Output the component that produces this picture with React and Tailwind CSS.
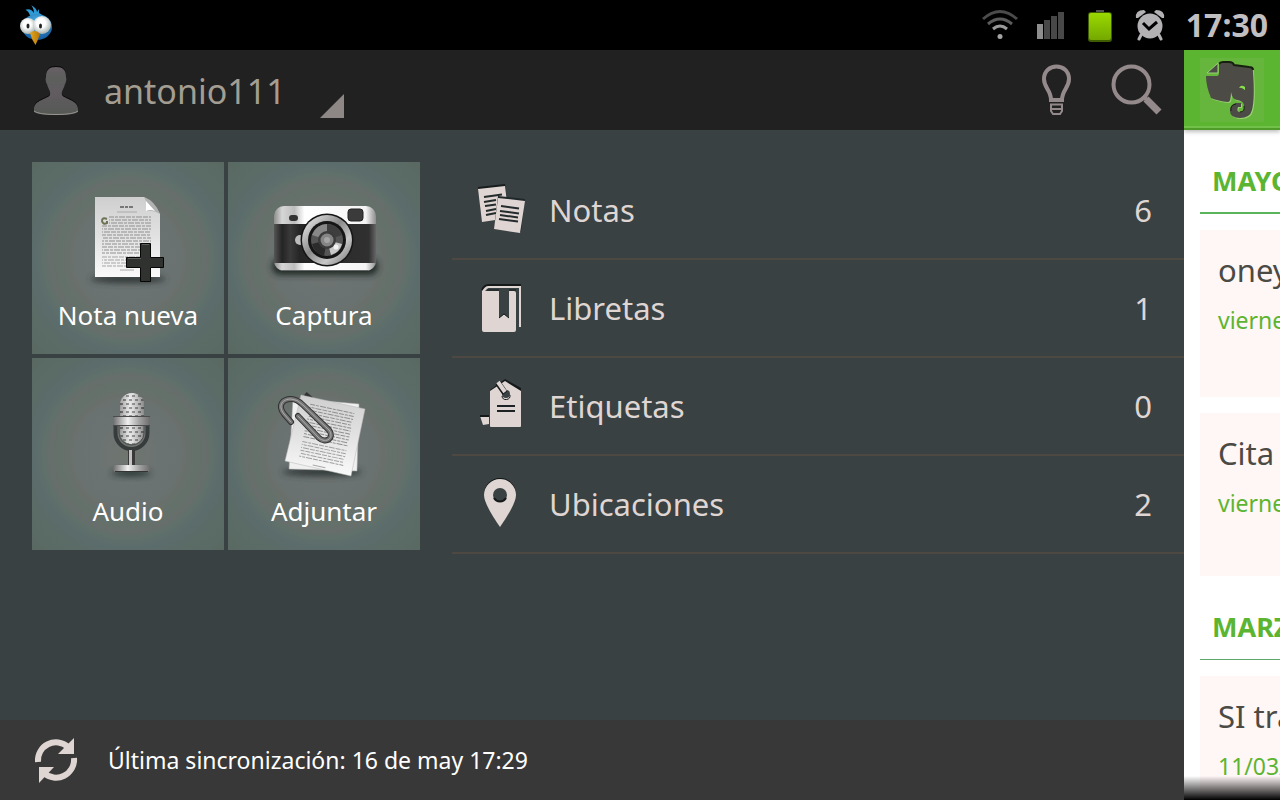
import React from 'react';

const actions = [
  { label: 'Nota nueva', Icon: NewNoteIcon },
  { label: 'Captura', Icon: CameraIcon },
  { label: 'Audio', Icon: MicIcon },
  { label: 'Adjuntar', Icon: AttachIcon },
];

const sections = [
  { label: 'Notas', count: 6, Icon: NotesIcon },
  { label: 'Libretas', count: 1, Icon: NotebookIcon },
  { label: 'Etiquetas', count: 0, Icon: TagIcon },
  { label: 'Ubicaciones', count: 2, Icon: PinIcon },
];

/* ---------- status bar ---------- */

function BirdIcon() {
  return (
    <svg width="34" height="42" viewBox="19 4 34 42">
      <defs>
        <radialGradient id="birdBody" cx="0.5" cy="0.3" r="0.7">
          <stop offset="0" stopColor="#4db4e6" />
          <stop offset="1" stopColor="#12599f" />
        </radialGradient>
        <radialGradient id="birdEye" cx="0.45" cy="0.4" r="0.6">
          <stop offset="0.4" stopColor="#ffffff" />
          <stop offset="1" stopColor="#a9b2b0" />
        </radialGradient>
        <linearGradient id="birdBeak" x1="0" y1="0" x2="1" y2="0">
          <stop offset="0" stopColor="#e0a724" />
          <stop offset="1" stopColor="#b87404" />
        </linearGradient>
      </defs>
      <path d="M31 18 C29 12 27 10 25 10 C29 8 32 10 34 13 C34 9 32 6 31 5 C35 7 37 10 37 12 L39 9 L39 13 C42 14 43 16 43 19 Z" fill="#2f9bd6" />
      <ellipse cx="37" cy="27" rx="15" ry="13" fill="url(#birdBody)" />
      <circle cx="28" cy="26" r="8" fill="url(#birdEye)" />
      <circle cx="42" cy="25" r="9" fill="url(#birdEye)" />
      <ellipse cx="28" cy="26" rx="1.500" ry="2.500" fill="#222" />
      <ellipse cx="40.500" cy="26" rx="1.500" ry="2.500" fill="#222" />
      <path d="M30 33 Q32 31 35 31 Q38 31 40 34 Q38 40 35.500 45 Q32 40 30 33 Z" fill="url(#birdBeak)" />
    </svg>
  );
}

function WifiIcon() {
  return (
    <svg width="38" height="32" viewBox="981 9 38 32" fill="none" strokeWidth="3">
      <path d="M983 19 Q1000 4 1017 19" stroke="#4b4b4b" />
      <path d="M988 24 Q1000 14 1012 24" stroke="#5c5c5c" />
      <path d="M993 29 Q1000 23 1007 29" stroke="#9a9a9a" />
      <circle cx="1000" cy="36.500" r="2.500" fill="#a5a5a5" />
    </svg>
  );
}

function SignalIcon() {
  return (
    <svg width="28" height="28" viewBox="0 0 28 28" fill="#484848">
      <rect x="0" y="13" width="6" height="15" fill="#8e8e8e" />
      <rect x="7" y="9" width="6" height="19" />
      <rect x="14" y="5" width="6" height="23" />
      <rect x="21" y="1" width="6" height="27" />
    </svg>
  );
}

function BatteryIcon() {
  return (
    <svg width="28" height="36" viewBox="0 0 28 36">
      <defs>
        <linearGradient id="battery" x1="0" y1="0" x2="0" y2="1">
          <stop offset="0" stopColor="#9ad900" />
          <stop offset="1" stopColor="#74a800" />
        </linearGradient>
      </defs>
      <rect x="10" y="3" width="8" height="3" fill="#555" />
      <rect x="2" y="5" width="24" height="30" rx="3" fill="#3e5c00" />
      <rect x="3" y="6" width="22" height="27" rx="2" fill="url(#battery)" />
    </svg>
  );
}

function AlarmIcon() {
  return (
    <svg width="30" height="32" viewBox="0 0 30 32">
      <g fill="#b4b1b4">
        <path d="M1 9 Q0 1 9 1 L11 3 L3 9 Z" />
        <path d="M29 9 Q30 1 21 1 L19 3 L27 9 Z" />
        <circle cx="15" cy="17" r="12.500" />
      </g>
      <path d="M6 26 L4 30 M24 26 L26 30" stroke="#b4b1b4" strokeWidth="3" strokeLinecap="round" />
      <path d="M8 14 L14 20 L22 13" fill="none" stroke="#000" strokeWidth="3" />
    </svg>
  );
}

/* ---------- header and footer ---------- */

function AvatarIcon() {
  return (
    <svg width="48" height="52" viewBox="32 65 48 52">
      <defs>
        <linearGradient id="avatar" x1="0" y1="0" x2="0" y2="1">
          <stop offset="0" stopColor="#686066" />
          <stop offset="0.250" stopColor="#5c5f5c" />
          <stop offset="0.500" stopColor="#625c61" />
          <stop offset="1" stopColor="#555955" />
        </linearGradient>
        <path id="bust" d="M56 68 C49 68 46 71 46 78 C45 79 46 84 47 85 C48 90 51 92 50 96 C48 100 34 101 34 110 V113 Q38 116 56 116 Q74 116 78 113 V110 C78 101 64 100 62 96 C61 92 64 90 65 85 C66 84 67 79 66 78 C66 71 63 68 56 68 Z" />
      </defs>
      <use href="#bust" y="-1" fill="#0a0a0a" />
      <use href="#bust" fill="url(#avatar)" />
      <path d="M34 112 Q38 115.500 56 115.500 Q74 115.500 78 112" fill="none" stroke="#9a9692" />
    </svg>
  );
}

function BulbIcon() {
  return (
    <svg width="32" height="52" viewBox="1041 64 32 52" fill="none" stroke="#958a8b">
      <path d="M1051 100 C1051 90 1044 88 1044 79 C1044 71 1050 66.500 1056.500 66.500 C1063 66.500 1069 71 1069 79 C1069 88 1062 90 1062 100 Z" strokeWidth="4" />
      <path d="M1051 104.500 H1062 V111 L1060 114 H1053 L1051 111 Z M1051 109 H1062" strokeWidth="2" />
    </svg>
  );
}

function SearchIcon() {
  return (
    <svg width="52" height="52" viewBox="1111 63 52 52" fill="none" stroke="#958a8b">
      <circle cx="1131.500" cy="83.500" r="18" strokeWidth="4" />
      <path d="M1146 98 L1159 111" strokeWidth="7" />
      <path d="M1143 95 L1147 99" strokeWidth="4" />
    </svg>
  );
}

function ElephantIcon() {
  return (
    <svg width="64" height="64" viewBox="1200 58 64 64">
      <defs>
        <path id="elephant" d="M1219 65 Q1219 62 1223 62 H1229 Q1233 62 1234 65 L1249 67 Q1253 67 1253 72 Q1255 98 1252 110 Q1250 118 1240 118 Q1230 118 1230 111 Q1230 104 1236 103 H1241 V107 H1238 Q1236 112 1240 112 Q1245 112 1244 106 Q1244 101 1237 100 Q1232 99 1231 92 Q1231 102 1228 102 Q1218 101 1211 98 Q1206 86 1206 76 H1217 Q1219 76 1219 73 Z" />
      </defs>
      <rect x="1200" y="58" width="64" height="64" fill="#66b53c" />
      <use href="#elephant" x="1" y="1" fill="#9bd276" />
      <use href="#elephant" fill="#4c4b46" />
      <path d="M1219 64 Q1220 62 1223 62 H1229 Q1233 62 1234 65 L1249 67 Q1253 67 1253 70" fill="none" stroke="#17200f" strokeWidth="2" />
      <path d="M1231 111 Q1230 105 1236 104 M1240 112 Q1245 112 1244 106" fill="none" stroke="#17200f" />
      <path d="M1207 73 L1218 63 V73 Z" fill="#4c4b46" stroke="#9bd276" />
      <path d="M1239 88 Q1241 84 1245 87 V90 Q1241 87 1239 88 Z" fill="#8ae04c" />
    </svg>
  );
}

function SyncIcon() {
  return (
    <svg width="48" height="48" viewBox="32 27 48 48">
      <g fill="none" stroke="#dfd5d2" strokeWidth="6">
        <path d="M38 53 A18 18 0 0 1 68 38" />
        <path d="M74 49 A18 18 0 0 1 44 64" />
      </g>
      <path d="M74 29 V45 H58 Z M39 74 V58 H54 Z" fill="#dfd5d2" />
    </svg>
  );
}

/* ---------- tile drawings, in tile coordinates ---------- */

function TextLines({ x1, x2, from, count, color = '#8f8f8f' }) {
  return Array.from({ length: count }, (_, i) => (
    <path key={i} d={`M${x1} ${from + i * 3} H${x2}`} stroke={color} strokeWidth="1" strokeDasharray="5 1 3 1 6 1" strokeDashoffset={i * 4} />
  ));
}

function TileArt({ children }) {
  return (
    <svg width="128" height="132" viewBox="32 0 128 132" aria-hidden="true">
      <defs>
        <filter id="soft" x="-20%" y="-100%" width="140%" height="300%">
          <feGaussianBlur stdDeviation="3" />
        </filter>
        <linearGradient id="chrome" x1="0" y1="0" x2="1" y2="0">
          <stop offset="0" stopColor="#8d8d8d" />
          <stop offset="0.080" stopColor="#d6d6d6" />
          <stop offset="0.200" stopColor="#bdbdbd" />
          <stop offset="0.300" stopColor="#ffffff" />
          <stop offset="0.900" stopColor="#f4f4f4" />
          <stop offset="1" stopColor="#8d8d8d" />
        </linearGradient>
        <linearGradient id="steel" x1="0" y1="0" x2="1" y2="0">
          <stop offset="0" stopColor="#6c6c6c" />
          <stop offset="0.400" stopColor="#f0f0f0" />
          <stop offset="0.700" stopColor="#a5a5a5" />
          <stop offset="1" stopColor="#6c6c6c" />
        </linearGradient>
        <linearGradient id="paper" x1="0" y1="0" x2="0" y2="1">
          <stop offset="0" stopColor="#cfcfcf" />
          <stop offset="0.500" stopColor="#e2e2e2" />
          <stop offset="1" stopColor="#fafafa" />
        </linearGradient>
        <linearGradient id="leather" x1="0" y1="0" x2="1" y2="0">
          <stop offset="0" stopColor="#555" />
          <stop offset="0.080" stopColor="#242424" />
          <stop offset="0.160" stopColor="#3a3a3a" />
          <stop offset="0.250" stopColor="#262626" />
          <stop offset="0.930" stopColor="#303030" />
          <stop offset="1" stopColor="#666" />
        </linearGradient>
        <linearGradient id="ring" x1="0" y1="0" x2="1" y2="1">
          <stop offset="0" stopColor="#f6f6f6" />
          <stop offset="0.450" stopColor="#8b8b8b" />
          <stop offset="0.700" stopColor="#c8c8c8" />
          <stop offset="1" stopColor="#6d6d6d" />
        </linearGradient>
        <linearGradient id="round" x1="0" y1="0" x2="1" y2="0">
          <stop offset="0" stopColor="#333" stopOpacity="0.4" />
          <stop offset="0.400" stopColor="#fff" stopOpacity="0.3" />
          <stop offset="1" stopColor="#333" stopOpacity="0.5" />
        </linearGradient>
        <pattern id="mesh" width="6" height="8" patternUnits="userSpaceOnUse">
          <rect width="6" height="8" fill="#dcdcdc" />
          <path d="M1 2 H4 M4 6 H7 M-1 6 H1" stroke="#6f6f6f" strokeWidth="2" />
          <path d="M1 0 H4 M4 4 H7" stroke="#f8f8f8" />
        </pattern>
      </defs>
      {children}
    </svg>
  );
}

function NewNoteIcon() {
  return (
    <TileArt>
      <ellipse cx="96" cy="117" rx="38" ry="4" fill="#2e3634" filter="url(#soft)" />
      <path d="M63 35 H112 Q122 40 128 52 V115 H63 Z" fill="url(#paper)" />
      <path d="M112 35 Q116 42 115 49 Q122 48 128 52 Q123 39 112 35 Z" fill="#b2b2b2" />
      <path d="M114 39 L123 49 Q118 47 114 49 Z" fill="#fff" />
      <path d="M88 45 H102" stroke="#777" strokeWidth="2" strokeDasharray="4 1 3 1" />
      <path d="M85 50 H105" stroke="#aaa" />
      <TextLines x1={77} x2={119} from={55} count={3} />
      <TextLines x1={70} x2={119} from={64} count={10} />
      <TextLines x1={70} x2={119} from={95} count={4} color="#a5a5a5" />
      <path d="M75 57 Q70 55 70 59 Q71 63 75 61 V59" fill="none" stroke="#6b7353" strokeWidth="2" />
      <path d="M88 108 H102" stroke="#aaa" />
      <path d="M108.500 81.500 H118.500 V95.500 H131.500 V105.500 H118.500 V119.500 H108.500 V105.500 H94.500 V95.500 H108.500 Z" fill="#303230" stroke="#060606" strokeLinejoin="round" />
      <path d="M110 82.500 H117 M96 96.500 H109" stroke="#5c5e5c" />
    </TileArt>
  );
}

function CameraIcon() {
  return (
    <TileArt>
      <rect x="44" y="96" width="106" height="17" rx="8" fill="#222a28" filter="url(#soft)" />
      <rect x="46" y="44" width="102" height="65" rx="10" fill="url(#chrome)" />
      <rect x="46" y="62" width="102" height="39" fill="url(#leather)" />
      <path d="M54 108.500 H140" stroke="#666" />
      <rect x="61" y="53" width="9" height="6" rx="3" fill="#333" />
      <rect x="120" y="47" width="15" height="12" rx="3" fill="#3b3b3b" stroke="#222" />
      <circle cx="72" cy="78" r="5" fill="#bcbcbc" />
      <circle cx="99" cy="78" r="26.500" fill="#151515" />
      <circle cx="99" cy="78" r="25" fill="url(#ring)" />
      <circle cx="99" cy="78" r="19" fill="#161616" />
      <circle cx="99" cy="78" r="16" fill="#555" />
      <path d="M99 78 L84 73 A16 16 0 0 1 99 62 Z" fill="#888" />
      <path d="M99 78 L99 62 A16 16 0 0 1 114 73 Z" fill="#3e3e3e" />
      <path d="M99 78 L114 82 A16 16 0 0 1 103 93 Z" fill="#c9c9c9" />
      <path d="M99 78 L84 82 A16 16 0 0 0 96 94 Z" fill="#2b2b2b" />
      <circle cx="99" cy="78" r="9" fill="#3c3c3c" />
      <circle cx="99" cy="78" r="6.500" fill="#858585" />
      <circle cx="99" cy="78" r="3" fill="#a5a5a5" />
      <circle cx="108" cy="85" r="2.500" fill="#fff" opacity="0.8" />
    </TileArt>
  );
}

function MicIcon() {
  return (
    <TileArt>
      <ellipse cx="99" cy="115" rx="20" ry="3" fill="#1f2d2e" filter="url(#soft)" />
      <rect x="88" y="35" width="24" height="51" rx="12" fill="url(#mesh)" />
      <rect x="88" y="35" width="24" height="51" rx="12" fill="url(#round)" />
      <path d="M83.500 66 V75 A16 16 0 0 0 115.500 75 V66" fill="none" stroke="#383b3b" strokeWidth="4" />
      <path d="M87 67 V75 A12.500 12 0 0 0 112 75 V67" fill="none" stroke="#4d5150" />
      <rect x="81" y="59" width="37" height="8" fill="url(#steel)" />
      <path d="M81 58.500 H118 M81 67.500 H118" stroke="#4c4c4c" />
      <rect x="96" y="92" width="7" height="16" fill="#393939" />
      <rect x="97" y="92" width="3" height="16" fill="#c2c2c2" />
      <rect x="81" y="107" width="37" height="7" rx="3" fill="url(#steel)" />
      <path d="M83 113.500 H116" stroke="#333" />
    </TileArt>
  );
}

const clipPath = 'M62 63 L55 55 C48 46 54 40 62 40 Q68 40 74 46 L100 71 C106 79 97 85 90 79 L69 57';

function AttachIcon() {
  return (
    <TileArt>
      <ellipse cx="94" cy="114" rx="40" ry="4" fill="#2e3634" filter="url(#soft)" />
      <path d="M77 36 L84 42" stroke="#333" strokeWidth="5" />
      <path d="M65 40 L131 46 L129 113 L61 111 Z" fill="#f0f0f0" stroke="#aaa" strokeWidth="0.500" />
      <path d="M73 37 L137 51 L123 118 L57 103 Z" fill="url(#paper)" stroke="#b5b5b5" strokeWidth="0.500" />
      <g transform="rotate(12 97 78)">
        <TextLines x1={76} x2={121} from={50} count={12} />
        <TextLines x1={76} x2={121} from={88} count={6} color="#a0a0a0" />
        <path d="M91 109 H104" stroke="#aaa" />
      </g>
      <g transform="translate(1 1)" fill="none" strokeLinecap="round" strokeLinejoin="round">
        <path d={clipPath} stroke="#323232" strokeWidth="6" />
        <path d={clipPath} stroke="#747474" strokeWidth="4" />
        <path d={clipPath} stroke="#adadad" strokeWidth="1" />
      </g>
    </TileArt>
  );
}

/* ---------- list icons ---------- */

function NotesIcon() {
  return (
    <svg width="52" height="56" viewBox="474 182 52 56" aria-hidden="true">
      <path d="M478 187 L505 184 L509 217 L482 220 Z" fill="#171c1d" />
      <path d="M478 189 L505 186 L509 218 L482 222 Z" fill="#dfd5d2" />
      <path d="M484 197 L502 194.500 M484 202 L496 200 M485 206 L496 204.500 M486 211 L496 209 M486 215 L496 213" stroke="#242b2c" strokeWidth="2" />
      <path d="M498 196 L525 199 L521 232 L494 229 Z" fill="#20282a" />
      <path d="M498 198 L525 201 L520 233 L494 229 Z" fill="#dfd5d2" />
      <path d="M501 206 L519 208.500 M500 211 L519 213.500 M500 215 L518 217.500 M499 219 L518 221.500" stroke="#242b2c" strokeWidth="2" />
    </svg>
  );
}

function NotebookIcon() {
  return (
    <svg width="52" height="56" viewBox="474 280 52 56" aria-hidden="true">
      <path d="M482 290 Q484 285 489 285 H520 V290" fill="none" stroke="#15191a" strokeWidth="2" />
      <path d="M483 292 Q485 287 489 287 H520 V327" fill="none" stroke="#dfd5d2" strokeWidth="2" />
      <path d="M482 291 L489 287 L485 291 H514 Q516 291 516 293 V330 Q516 332 514 332 H484 Q482 332 482 330 Z" fill="#dfd5d2" />
      <path d="M487 290 H516" stroke="#272e30" strokeWidth="2" />
      <path d="M499 289 H509 V318 L504 314 L499 318 Z" fill="#3a4143" />
      <path d="M499 318 L504 314 L509 318" fill="none" stroke="#121616" strokeWidth="1" />
    </svg>
  );
}

function TagIcon() {
  return (
    <svg width="52" height="56" viewBox="474 378 52 56" aria-hidden="true">
      <path d="M490 390 L505 379 L521 388 V395 H490 Z" fill="#15191a" />
      <path d="M490 391 L505 381 L521 391 V426 Q521 427 520 427 H491 Q490 427 490 426 Z" fill="#dfd5d2" />
      <circle cx="506" cy="394" r="4" fill="#3a4143" />
      <path d="M502 396 A4 4 0 0 0 510 395" fill="none" stroke="#15191a" />
      <path d="M498 383 L505 393" stroke="#15191a" strokeWidth="6" />
      <path d="M498 382 L505 392" stroke="#dfd5d2" strokeWidth="4" />
      <path d="M497 406 H515 M497 411 H515" stroke="#1d2324" strokeWidth="2" />
      <path d="M480 416 H489 V424 L483 425 Z" fill="#dfd5d2" />
      <path d="M480 416 H489" stroke="#15191a" strokeWidth="2" />
    </svg>
  );
}

function PinIcon() {
  return (
    <svg width="52" height="56" viewBox="474 476 52 56" aria-hidden="true">
      <path d="M484 494 A16 16 0 0 1 516 494 Z" fill="#101414" />
      <path d="M500 527 Q484 504 484 495 A16 16 0 0 1 516 495 Q516 504 500 527 Z" fill="#dfd5d2" />
      <circle cx="500" cy="495" r="7" fill="#3a4143" />
      <path d="M494 498 A7 7 0 0 0 506 498" fill="none" stroke="#15191a" strokeWidth="2" />
    </svg>
  );
}

/* ---------- layout ---------- */

const StatusBar = () => (
  <div className="flex h-[50px] shrink-0 items-center justify-between bg-black pl-[19px] pr-3">
    <BirdIcon />
    <div className="flex items-center">
      <WifiIcon />
      <div className="ml-[18px] flex items-center gap-[21px]">
        <SignalIcon />
        <BatteryIcon />
        <AlarmIcon />
      </div>
      <span className="ml-[21px] text-[32px] font-bold leading-10 text-[#c2bfc2]">17:30</span>
    </div>
  </div>
);

const Header = () => (
  <header className="flex h-20 shrink-0 items-center justify-between bg-[#212121] pl-8 pr-[21px]">
    <button type="button" className="flex h-full items-center">
      <AvatarIcon />
      <span className="ml-6 pt-0.5 text-[34px] leading-[48px] text-[#a39d92]">antonio111</span>
      <svg width="24" height="24" viewBox="0 0 24 24" className="mb-3 ml-[34px] self-end">
        <path d="M24 0 V24 H0 Z" fill="#8d8785" />
      </svg>
    </button>
    <div className="flex items-center gap-[38px]">
      <button type="button" aria-label="Consejos"><BulbIcon /></button>
      <button type="button" aria-label="Buscar"><SearchIcon /></button>
    </div>
  </header>
);

const ActionTile = ({ label, Icon }) => (
  <button
    type="button"
    className="flex h-48 w-48 flex-col items-center bg-[radial-gradient(circle_at_center,#70756f_0px,#6b7372_32px,#6a7271_52px,#69706b_60px,#63716a_68px,#676e6b_78px,#60706a_84px,#5b6c6c_94px,#5b6b66_108px,#596962_136px)]"
  >
    <Icon />
    <span className="text-[26px] leading-[42px] text-white">{label}</span>
  </button>
);

const SectionRow = ({ label, count, Icon }) => (
  <li className="border-b-2 border-[#4d4842]">
    <a href="#" className="flex h-24 items-center pl-[22px] pr-8 text-[31px] leading-[48px] text-[#dfd5d2]">
      <Icon />
      <span className="ml-[23px] flex-1">{label}</span>
      <span>{count}</span>
    </a>
  </li>
);

const MonthHeading = ({ children, border }) => (
  <h2 className={`h-[84px] pl-3 pt-[31px] text-[27px] font-bold leading-10 text-[#5bb531] ${border}`}>
    {children}
  </h2>
);

const NoteCard = ({ title, date, height }) => (
  <article className={`whitespace-nowrap bg-[#fff6f6] pl-[18px] pt-5 ${height}`}>
    <h3 className="text-[31px] leading-10 text-[#4b4a44]">{title}</h3>
    <p className="mt-[10px] text-[23px] leading-10 text-[#5bb531]">{date}</p>
  </article>
);

const NotesPanel = () => (
  <aside className="relative flex w-24 shrink-0 flex-col overflow-hidden bg-white">
    <div className="flex h-20 shrink-0 items-start border-b-2 border-[#4f9c2b] bg-[#5bb531] pl-4 pt-2 shadow-[inset_0_-2px_0_#70c04a,0_2px_4px_rgba(0,0,0,0.25)]">
      <ElephantIcon />
    </div>
    <div className="min-h-0 flex-1 overflow-hidden pl-4">
      <MonthHeading border="border-b-2 border-[#5bb55a]">MAYO</MonthHeading>
      <div className="mt-4 flex flex-col gap-4">
        <NoteCard title="oney" date="viernes" height="h-[167px]" />
        <NoteCard title="Cita" date="viernes" height="h-[163px]" />
      </div>
      <MonthHeading border="border-b border-[#5ba86a]">MARZO</MonthHeading>
      <div className="mt-4">
        <NoteCard title="SI tra" date="11/03/" height="h-[163px]" />
      </div>
    </div>
    <div className="pointer-events-none absolute inset-x-0 bottom-0 h-6 bg-linear-to-b from-transparent to-black" />
  </aside>
);

const App = () => {
  return (
    <div className="flex h-screen flex-col overflow-hidden bg-black font-['Noto_Sans','Open_Sans',sans-serif]">
      <StatusBar />
      <div className="flex min-h-0 flex-1">
        <div className="flex min-w-0 flex-1 flex-col">
          <Header />
          <main className="flex min-h-0 flex-1 items-start gap-8 bg-[#3a4143] pl-8 pt-8">
            <div className="grid shrink-0 grid-cols-2 gap-1">
              {actions.map(action => (
                <ActionTile key={action.label} {...action} />
              ))}
            </div>
            <ul className="min-w-0 flex-1">
              {sections.map(section => (
                <SectionRow key={section.label} {...section} />
              ))}
            </ul>
          </main>
          <footer className="flex h-20 shrink-0 items-center bg-[#383838] pl-8">
            <button type="button" aria-label="Sincronizar"><SyncIcon /></button>
            <p className="ml-7 text-[23px] leading-8 text-white">
              Última sincronización: 16 de may 17:29
            </p>
          </footer>
        </div>
        <NotesPanel />
      </div>
    </div>
  );
};

export default App;
